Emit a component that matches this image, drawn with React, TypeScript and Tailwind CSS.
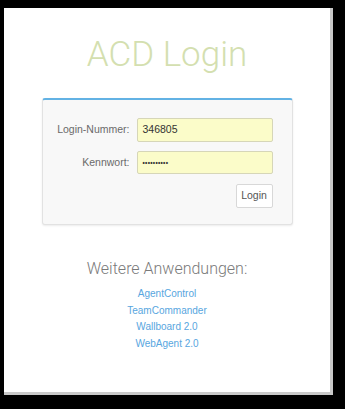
export default function App() {
  const apps = ['AgentControl', 'TeamCommander', 'Wallboard 2.0', 'WebAgent 2.0'];

  return (
    <main className="min-h-screen bg-black pt-[8px] pl-[4px] font-['Roboto',sans-serif]">
      <div className="w-[329px] h-[387px] bg-white border-r-[3px] border-b-[3px] border-[#c9c9c9]">
        <h1 className="pt-[29px] text-center text-[35px] leading-[35px] font-light text-[#d4dfb0]">
          ACD Login
        </h1>

        {/* Login form */}
        <div className="mx-auto mt-[26px] w-[251px] h-[127px] rounded-[3px] border border-[#e2e2e2] border-t-2 border-t-[#62b2e4] bg-[#f8f8f8] shadow-[0_1px_2px_rgba(0,0,0,0.08)] pt-[18px] pr-[19px]">
          <div className="grid grid-cols-[87px_1fr] gap-x-[7px] gap-y-[9px] items-center text-[10.5px] font-['Liberation_Sans',sans-serif]">
            <label className="text-right text-[#6a6a6a]">Login-Nummer:</label>
            <div className="h-[24px] rounded-[2px] border border-[#d6d6b8] bg-[#fbfcc9] px-[5px] flex items-center text-[#333]">
              346805
            </div>
            <label className="text-right text-[#6a6a6a]">Kennwort:</label>
            <div className="h-[23px] rounded-[2px] border border-[#d6d6b8] bg-[#fbfcc9] px-[5px] flex items-center text-[#333] text-[6.5px] font-bold tracking-[0.3px]">
              ••••••••••
            </div>
          </div>
          <div className="flex justify-end mt-[10px]">
            <button className="h-[24px] w-[37px] rounded-[2px] border border-[#d8d8d8] bg-white text-[10.5px] text-[#555] font-['Liberation_Sans',sans-serif]">
              Login
            </button>
          </div>
        </div>

        <h2 className="mt-[32px] text-center text-[16px] font-light text-[#7a7a7a]">
          Weitere Anwendungen:
        </h2>
        <ul className="mt-[5px] text-center text-[10px] leading-[16.5px] text-[#58a6e0] font-['Liberation_Sans',sans-serif]">
          {apps.map((a) => (
            <li key={a}>
              <a href="#">{a}</a>
            </li>
          ))}
        </ul>
      </div>
    </main>
  );
}
